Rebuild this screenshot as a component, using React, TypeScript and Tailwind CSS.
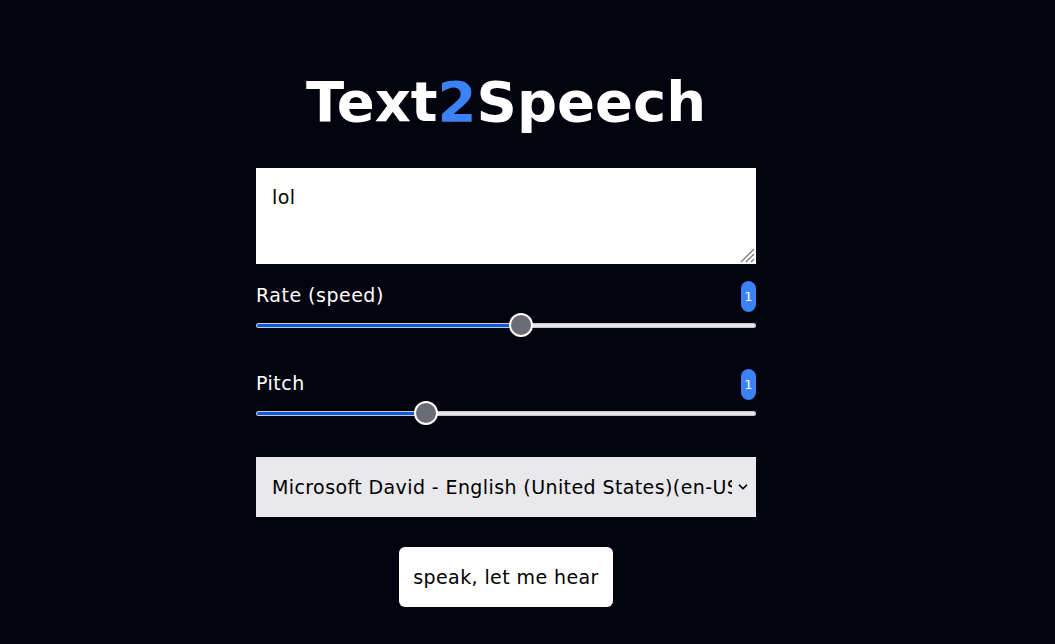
import { ChevronDown } from 'lucide-react';

const font = { fontFamily: '"DejaVu Sans", "Noto Sans", sans-serif' };

const Slider = ({ label, percent }: { label: string; percent: number }) => {
    return (
        <div className="flex flex-col">
            <div className="flex items-end justify-between h-[31px]">
                <span className="text-[19px] tracking-[0.5px] leading-none text-white pb-[7px]">{label}</span>
                <span className="flex items-center justify-center w-[15px] h-[31px] rounded-full bg-[#3b82f6] text-[13px] text-white">
                    1
                </span>
            </div>
            <div className="relative h-[26px] flex items-center">
                <div className="w-full h-[5px] rounded-full bg-[#e6e5ea] border border-[#9a9aa4]/40 overflow-hidden">
                    <div className="h-full bg-[#0b5bdc]" style={{ width: `${percent}%` }} />
                </div>
                <div
                    className="absolute top-[1px] w-[24px] h-[24px] -ml-[12px] rounded-full bg-[#6b6b77] border-2 border-white"
                    style={{ left: `${percent}%` }}
                />
            </div>
        </div>
    );
};

export default function App() {
    return (
        <div className="min-h-[644px] bg-[#03030f] flex flex-col items-center pr-[43px]" style={font}>
            <h1 className="mt-[62px] text-[56px] leading-[80px] font-bold text-white">
                Text<span className="text-[#3b82f6]">2</span>Speech
            </h1>
            <div className="w-[500px] mt-[26px] flex flex-col">
                <div className="relative h-[96px] bg-white px-4 pt-[20px] text-[19px] tracking-[0.4px] text-black leading-none">
                    lol
                    <svg className="absolute right-[1px] bottom-[1px]" width="17" height="17" viewBox="0 0 17 17">
                        <path d="M16 3 L3 16 M16 8 L8 16 M16 13 L13 16" stroke="#7a7a7a" strokeWidth="1.3" />
                    </svg>
                </div>
                <div className="mt-[17px]">
                    <Slider label="Rate (speed)" percent={53} />
                </div>
                <div className="mt-[31px]">
                    <Slider label="Pitch" percent={34} />
                </div>
                <div className="mt-[31px] h-[60px] bg-[#e9e8ed] flex items-center pl-4 pr-[6px] gap-1">
                    <span className="flex-1 overflow-hidden whitespace-nowrap text-[19px] tracking-[0.4px] text-black">
                        Microsoft David - English (United States)(en-US)
                    </span>
                    <ChevronDown className="w-[14px] h-[14px] text-black" strokeWidth={3} />
                </div>
                <div className="flex justify-center mt-[30px]">
                    <button className="h-[60px] w-[214px] bg-white rounded-md text-[19px] tracking-[0.4px] text-black">
                        speak, let me hear
                    </button>
                </div>
            </div>
        </div>
    );
}
